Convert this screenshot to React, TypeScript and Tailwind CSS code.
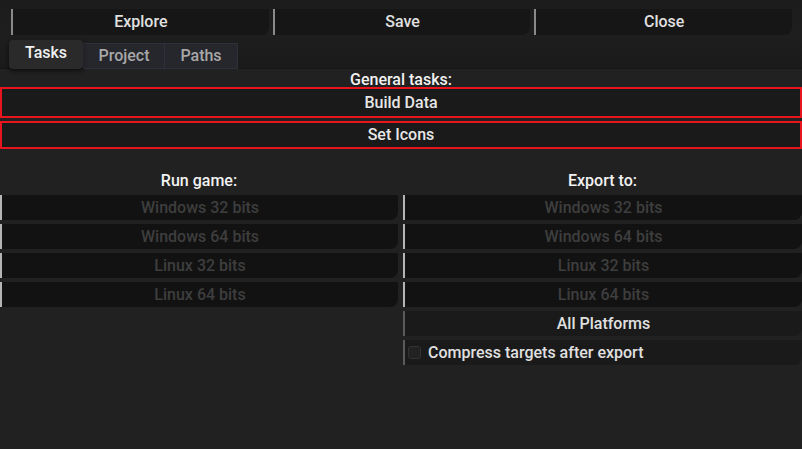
const font = { fontFamily: "Roboto, 'Liberation Sans', sans-serif" };

function TopButton({ label }: { label: string }) {
  return (
    <button className="flex-1 h-[26px] bg-[#161616] border-l-2 border-[#8a8a8a] rounded-br-[8px] text-[16px] font-medium text-[#e0e0e0] flex items-center justify-center">
      {label}
    </button>
  );
}

function TaskButton({ label, tall }: { label: string; tall?: boolean }) {
  return (
    <button
      className={
        tall
          ? "w-full h-[31px] bg-[#1a1a1a] border-2 border-[#e8141e] text-[16px] font-medium text-[#e6e6e6] flex items-center justify-center"
          : "w-full h-[28px] bg-[#1a1a1a] border-2 border-[#e8141e] text-[16px] font-medium text-[#e6e6e6] flex items-center justify-center"
      }
    >
      {label}
    </button>
  );
}

function TargetButton({ label }: { label: string }) {
  return (
    <button className="w-full h-[25px] bg-[#121212] border-l-2 border-[#b5b5b5] rounded-br-[8px] text-[16px] font-medium text-[#3e3e3e] flex items-center justify-center">
      {label}
    </button>
  );
}

export default function App() {
  const targets = ["Windows 32 bits", "Windows 64 bits", "Linux 32 bits", "Linux 64 bits"];
  return (
    <div style={font} className="w-[802px] h-[449px] bg-[#212121] flex flex-col overflow-hidden">
      {/* header */}
      <div className="h-[69px] bg-gradient-to-b from-[#1c1c1c] via-[#1e1e1e] to-[#1a1a1a] border-b border-[#161616] flex flex-col">
        <div className="flex gap-[4px] pl-[11px] pr-[10px] pt-[9px]">
          <TopButton label="Explore" />
          <TopButton label="Save" />
          <TopButton label="Close" />
        </div>
        <div className="flex items-end pl-[9px] mt-[5px] h-[29px]">
          <div className="w-[74px] h-[29px] bg-[#2a2a2a] rounded-[4px] shadow-[0_2px_4px_rgba(0,0,0,0.6)] text-[16px] font-medium text-[#f0f0f0] flex items-center justify-center pb-[3px] z-10">
            Tasks
          </div>
          <div className="w-[82px] h-[26px] bg-[#26262d] border border-[#30303a] text-[16px] font-medium text-[#a8a8a8] flex items-center justify-center">
            Project
          </div>
          <div className="w-[73px] h-[26px] bg-[#26262d] border border-[#30303a] border-l-0 text-[16px] font-medium text-[#a8a8a8] flex items-center justify-center">
            Paths
          </div>
        </div>
      </div>

      {/* general tasks */}
      <div className="flex flex-col">
        <div className="h-[19px] mt-[1px] text-[16px] font-medium text-[#f2f2f2] flex items-center justify-center">
          General tasks:
        </div>
        <div className="flex flex-col gap-[3px] mt-[-2px]">
          <TaskButton label="Build Data" tall />
          <TaskButton label="Set Icons" />
        </div>
      </div>

      {/* run / export */}
      <div className="flex gap-[5px] mt-[20px]">
        <div className="w-[398px] flex flex-col">
          <div className="h-[24px] text-[16px] font-medium text-[#f2f2f2] flex items-center justify-center">
            Run game:
          </div>
          <div className="flex flex-col gap-[4px] mt-[2px]">
            {targets.map((t) => (
              <TargetButton key={t} label={t} />
            ))}
          </div>
        </div>
        <div className="flex-1 flex flex-col">
          <div className="h-[24px] text-[16px] font-medium text-[#f2f2f2] flex items-center justify-center">
            Export to:
          </div>
          <div className="flex flex-col gap-[4px] mt-[2px]">
            {targets.map((t) => (
              <TargetButton key={t} label={t} />
            ))}
            <button className="w-full h-[25px] bg-[#1a1a1a] border-l-2 border-[#5a5a5a] rounded-br-[8px] text-[16px] font-medium text-[#e0e0e0] flex items-center justify-center">
              All Platforms
            </button>
            <label className="w-full h-[25px] bg-[#1a1a1a] border-l-2 border-[#5a5a5a] rounded-br-[8px] flex items-center gap-[7px] pl-[3px]">
              <span className="w-[13px] h-[13px] rounded-[3px] bg-[#222222] border border-[#333333]" />
              <span className="text-[16px] font-medium text-[#e0e0e0]">Compress targets after export</span>
            </label>
          </div>
        </div>
      </div>
    </div>
  );
}
